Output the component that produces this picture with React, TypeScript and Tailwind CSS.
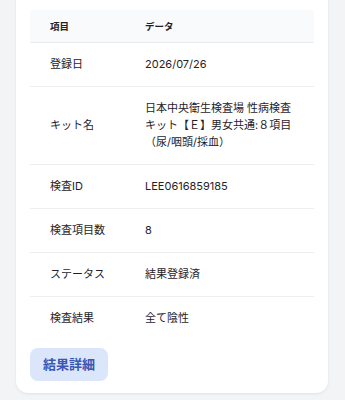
const rows: { label: string; value: string }[] = [
  { label: "登録日", value: "2026/07/26" },
  {
    label: "キット名",
    value: "日本中央衛生検査場 性病検査キット【Ｅ】男女共通:８項目（尿/咽頭/採血）",
  },
  { label: "検査ID", value: "LEE0616859185" },
  { label: "検査項目数", value: "8" },
  { label: "ステータス", value: "結果登録済" },
  { label: "検査結果", value: "全て陰性" },
];

export default function App() {
  return (
    <div
      className="h-[400px] overflow-hidden bg-[#f3f4f6] pl-4 pr-[17px]"
      style={{ fontFamily: 'Inter, "Noto Sans CJK JP", sans-serif' }}
    >
      <div className="-mt-4 rounded-xl bg-white px-[14px] pt-[26px] pb-3 shadow-[0_1px_3px_rgba(0,0,0,0.08)]">
        <table className="w-full table-fixed border-collapse text-left text-[#1f2329]">
          <colgroup>
            <col className="w-[95px]" />
            <col />
          </colgroup>
          <thead className="bg-[#f9fafb]">
            <tr className="border-b border-[#e8eaed]">
              <th className="whitespace-nowrap py-[8.5px] pl-5 pr-0 text-[9.5px] font-semibold leading-[15px]">
                項目
              </th>
              <th className="px-5 py-[8.5px] text-[9.5px] font-semibold leading-[15px]">データ</th>
            </tr>
          </thead>
          <tbody>
            {rows.map((row, i) => (
              <tr
                key={row.label}
                className={i < rows.length - 1 ? "border-b border-[#eceef1]" : ""}
              >
                <td className="whitespace-nowrap py-[13px] pl-5 pr-0 align-middle text-[11px] leading-[17px]">
                  {row.label}
                </td>
                <td className="px-5 py-[13px] align-middle text-[11px] leading-[17px]">
                  {row.value}
                </td>
              </tr>
            ))}
          </tbody>
        </table>
        <button
          type="button"
          className="mt-2 h-[33px] rounded-lg bg-[#dbe6fb] px-[13px] text-[13px] font-bold text-[#3a57b4]"
        >
          結果詳細
        </button>
      </div>
    </div>
  );
}
